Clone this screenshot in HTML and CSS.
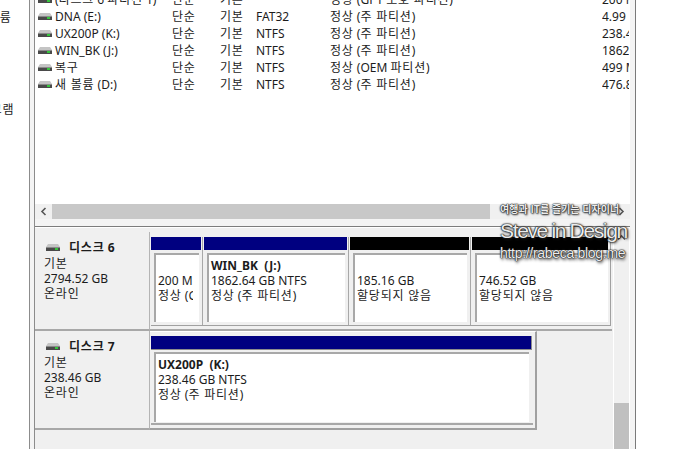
FILE: index.html
```html
<!DOCTYPE html>
<html lang="ko">
<head>
<meta charset="utf-8">
<title>디스크 관리</title>
<link rel="stylesheet" href="styles.css">
</head>
<body>
<svg class="defs" width="0" height="0"><defs>
<symbol id="hdd" viewBox="0 0 14 7">
<path d="M2 0h10l2 3H0z" fill="#c4c4c4"/>
<rect x="0" y="3" width="14" height="4" fill="#4a4a4a"/>
<rect x="0" y="3" width="14" height="1" fill="#8a8a8a"/>
<rect x="9" y="4" width="3" height="2" fill="#35c43c"/>
</symbol>
</defs></svg>
<div class="screen">
  <aside class="sidebar">
    <div class="side-a ko">볼륨</div>
    <div class="side-b ko">프로그램</div>
  </aside>
  <div class="frame">
    <main class="main">
      <section class="list">
        <div class="row"><div class="c-name"><svg class="ico"><use href="#hdd"/></svg><span>(<span class="ko">디스크</span> 6 <span class="ko">파티션</span> 1)</span></div><div class="c-layout ko">단순</div><div class="c-type ko">기본</div><div class="c-fs"></div><div class="c-status"><span class="ko">정상</span> (GPT <span class="ko">보호 파티션</span>)</div><div class="c-cap">200 MB</div></div>
        <div class="row"><div class="c-name"><svg class="ico"><use href="#hdd"/></svg><span>DNA (E:)</span></div><div class="c-layout ko">단순</div><div class="c-type ko">기본</div><div class="c-fs">FAT32</div><div class="c-status"><span class="ko">정상</span> (<span class="ko">주 파티션</span>)</div><div class="c-cap">4.99 GB</div></div>
        <div class="row"><div class="c-name"><svg class="ico"><use href="#hdd"/></svg><span>UX200P (K:)</span></div><div class="c-layout ko">단순</div><div class="c-type ko">기본</div><div class="c-fs">NTFS</div><div class="c-status"><span class="ko">정상</span> (<span class="ko">주 파티션</span>)</div><div class="c-cap">238.46 GB</div></div>
        <div class="row"><div class="c-name"><svg class="ico"><use href="#hdd"/></svg><span>WIN_BK (J:)</span></div><div class="c-layout ko">단순</div><div class="c-type ko">기본</div><div class="c-fs">NTFS</div><div class="c-status"><span class="ko">정상</span> (<span class="ko">주 파티션</span>)</div><div class="c-cap">1862.64 GB</div></div>
        <div class="row"><div class="c-name"><svg class="ico"><use href="#hdd"/></svg><span class="ko">복구</span></div><div class="c-layout ko">단순</div><div class="c-type ko">기본</div><div class="c-fs">NTFS</div><div class="c-status"><span class="ko">정상</span> (OEM <span class="ko">파티션</span>)</div><div class="c-cap">499 MB</div></div>
        <div class="row"><div class="c-name"><svg class="ico"><use href="#hdd"/></svg><span><span class="ko">새 볼륨</span> (D:)</span></div><div class="c-layout ko">단순</div><div class="c-type ko">기본</div><div class="c-fs">NTFS</div><div class="c-status"><span class="ko">정상</span> (<span class="ko">주 파티션</span>)</div><div class="c-cap">476.84 GB</div></div>
      </section>
      <div class="hscroll">
        <div class="arrow-l"><svg width="7" height="9" viewBox="0 0 7 9"><path d="M5.5 1 2 4.5 5.5 8" fill="none" stroke="#555" stroke-width="1.6"/></svg></div>
        <div class="hthumb"></div>
        <div class="arrow-r"><svg width="7" height="9" viewBox="0 0 7 9"><path d="M1.5 1 5 4.5 1.5 8" fill="none" stroke="#555" stroke-width="1.6"/></svg></div>
      </div>
      <div class="hgap"></div>
      <section class="lower">
        <div class="disks">
          <div class="disk">
            <div class="label">
              <div class="label-title"><svg class="ico-disk"><use href="#hdd"/></svg><b><span class="ko">디스크</span> 6</b></div>
              <div class="ko">기본</div><div>2794.52 GB</div><div class="ko">온라인</div>
            </div>
            <div class="parts parts-wide">
              <div class="parts-row">
                <div class="part w1"><div class="bar"></div><div class="body"><div>&nbsp;</div><div class="cut">200 MB</div><div class="cut"><span class="ko">정상</span> (GPT <span class="ko">보호 파티션</span>)</div></div></div>
                <div class="part w2"><div class="bar"></div><div class="body"><b>WIN_BK &nbsp;(J:)</b><div>1862.64 GB NTFS</div><div><span class="ko">정상</span> (<span class="ko">주 파티션</span>)</div></div></div>
                <div class="part w3"><div class="bar black"></div><div class="body"><div>&nbsp;</div><div>185.16 GB</div><div class="ko">할당되지 않음</div></div></div>
                <div class="part w4 last"><div class="bar black"></div><div class="body"><div>&nbsp;</div><div>746.52 GB</div><div class="ko">할당되지 않음</div></div></div>
              </div>
            </div>
          </div>
          <div class="disk">
            <div class="label">
              <div class="label-title"><svg class="ico-disk"><use href="#hdd"/></svg><b><span class="ko">디스크</span> 7</b></div>
              <div class="ko">기본</div><div>238.46 GB</div><div class="ko">온라인</div>
            </div>
            <div class="parts parts-single">
              <div class="part-one">
                <div class="bar edge"></div>
                <div class="body tall"><b>UX200P &nbsp;(K:)</b><div>238.46 GB NTFS</div><div><span class="ko">정상</span> (<span class="ko">주 파티션</span>)</div></div>
              </div>
            </div>
          </div>
        </div>
        <div class="vscroll">
          <div class="arrow-u"><svg width="9" height="7" viewBox="0 0 9 7"><path d="M1 5.5 4.5 2 8 5.5" fill="none" stroke="#555" stroke-width="1.6"/></svg></div>
          <div class="vtrack"></div>
          <div class="vthumb"></div>
        </div>
      </section>
    </main>
  </div>
  <div class="watermark">
    <div class="wm-a">여행과 IT를 즐기는 디자이너</div>
    <div class="wm-b">Steve in Design</div>
    <div class="wm-c">http://rabeca.blog.me</div>
  </div>
</div>
</body>
</html>
```
FILE: styles.css
```css
html, body { margin: 0; padding: 0; background: #fff; }
.defs { position: absolute; }
.screen {
  position: relative;
  display: flex;
  width: 674px;
  height: 449px;
  overflow: hidden;
  background: #fff;
  color: #1c1c1c;
  font: 12px/15px "Noto Sans", "Noto Sans CJK KR", sans-serif;
}
.ko { letter-spacing: 0.8px; }
.sidebar { width: 29px; flex: none; overflow: hidden; }
.side-a { margin: 10px 0 0 -12px; white-space: nowrap; }
.side-b { margin: 77px 0 0 -33px; white-space: nowrap; }
.frame {
  width: 596px;
  flex: none;
  border-left: 1px solid #8c8c8c;
  border-right: 1px solid #7a7a7a;
  background: #f4f4f4;
  padding: 0 5px 0 4px;
}
.main {
  height: 449px;
  border-left: 1px solid #8c8c8c;
  display: flex;
  flex-direction: column;
  background: #fff;
  overflow: hidden;
}
.list { height: 204px; flex: none; overflow: hidden; background: #fff; }
.row { display: flex; height: 17px; margin-left: 3px; white-space: nowrap; line-height: 17px; }
.row:first-child { margin-top: -9px; }
.c-name { width: 134px; display: flex; align-items: center; gap: 3px; flex: none; }
.ico { width: 14px; height: 7px; flex: none; }
.c-layout { width: 48px; flex: none; }
.c-type { width: 36px; flex: none; }
.c-fs { width: 74px; flex: none; }
.c-status { width: 272px; flex: none; }
.c-cap { width: 27px; flex: none; overflow: hidden; }
.hscroll { height: 15px; flex: none; display: flex; background: #f0f0f0; }
.arrow-l { width: 17px; flex: none; display: flex; align-items: center; justify-content: center; }
.hthumb { width: 438px; flex: none; background: #c8c8c8; }
.arrow-r { flex: 1; display: flex; align-items: center; justify-content: flex-end; padding-right: 5px; }
.hgap { height: 8px; flex: none; background: #f4f4f4; border-bottom: 1px solid #7d7d7d; box-sizing: border-box; }
.lower { flex: 1; display: flex; background: #f0f0f0; border-top: 1px solid #fff; min-height: 0; }
.disks { width: 578px; flex: none; padding-top: 4px; }
.disk { display: flex; height: 99px; }
.label {
  width: 105px;
  flex: none;
  padding: 6px 0 0 9px;
  height: 91px;
  border-right: 1px solid #b4b4b4;
  border-bottom: 2px solid #a8a8a8;
}
.label-title { display: flex; align-items: center; height: 18px; margin-left: 2px; gap: 9px; }
.ico-disk { width: 14px; height: 7px; flex: none; }
.parts { padding: 5px 0 0 1px; box-sizing: border-box; height: 99px; background: #f0f0f0; }
.parts-wide { width: 462px; border-bottom: 2px solid #a8a8a8; }
.parts-row { display: flex; height: 88px; border-bottom: 1px solid #a0a0a0; border-right: 1px solid #a0a0a0; width: 459px; }
.part {
  flex: none;
  display: flex;
  flex-direction: column;
  gap: 3px;
  padding-right: 1px;
  margin-right: 1px;
  border-right: 1px solid #a8a8a8;
}
.part.last { border-right: 0; margin-right: 0; padding-right: 0; }
.w1 { width: 50px; }
.w2 { width: 143px; }
.w3 { width: 119px; }
.w4 { width: 136px; }
.bar { height: 13px; flex: none; background: #000080; }
.bar.black { background: #000; }
.bar.edge { border-right: 1px solid #8c8c8c; border-bottom: 1px solid #8c8c8c; }
.body {
  height: 64px;
  margin-left: 3px;
  margin-right: 2px;
  padding: 3px 0 0 2px;
  background: #fff;
  border-top: 2px solid #a8a8a8;
  border-left: 2px solid #a8a8a8;
  overflow: hidden;
  white-space: nowrap;
  line-height: 15px;
}
.part.last .body { margin-right: 0; }
.cut { width: 35px; overflow: hidden; }
.parts-single {
  width: 387px;
  border-right: 2px solid #a0a0a0;
  border-bottom: 2px solid #a0a0a0;
  border-top: 1px solid #fff;
  padding-top: 4px;
}
.part-one {
  width: 382px;
  height: 87px;
  display: flex;
  flex-direction: column;
  gap: 2px;
  border-bottom: 2px solid #a8a8a8;
}
.part-one .bar { width: 380px; }
.part-one .body { height: 65px; margin-right: 4px; }
.vscroll { width: 15px; flex: none; display: flex; flex-direction: column; border-left: 1px solid #fff; background: #f0f0f0; border-right: 2px solid #fff; }
.arrow-u { height: 18px; display: flex; align-items: center; justify-content: center; flex: none; }
.vtrack { height: 157px; flex: none; }
.vthumb { flex: 1; background: #c0c0c0; }
.watermark {
  position: absolute;
  left: 500px;
  top: 199px;
  width: 128px;
  white-space: nowrap;
  color: #ececec;
  font-family: "Liberation Sans", sans-serif;
}
.wm-a {
  font: bold 10px/19px "Noto Sans CJK KR", sans-serif;
  text-shadow: 0 0 1px #222, 0 0 1px #222, 0 0 2px #222, 1px 1px 2px #333;
}
.wm-b {
  font-size: 21px;
  line-height: 26px;
  letter-spacing: -1.35px;
  text-shadow: 0 0 1px #111, 0 0 1px #111, 0 0 2px #222, 1px 1px 3px #222;
}
.wm-c {
  font-size: 14px;
  line-height: 18px;
  letter-spacing: -0.3px;
  text-shadow: 0 0 1px #111, 0 0 1px #111, 0 0 2px #222, 1px 2px 3px #222;
}
```
